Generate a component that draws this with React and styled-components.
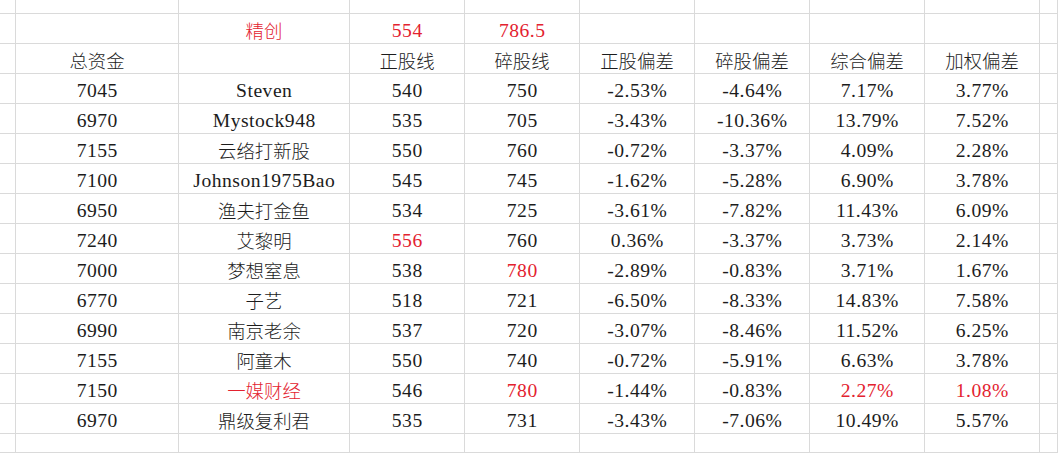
import React from "react";
import styled, { createGlobalStyle } from "styled-components";

const Global = createGlobalStyle`
  html, body { margin: 0; padding: 0; background: #fff; overflow: hidden; }
  #root { width: 1058px; height: 453px; overflow: hidden; }
`;

const Sheet = styled.div`
  display: grid;
  grid-template-columns: 16px 163px 171px repeat(6, 115px) 1fr;
  grid-template-rows: 14px repeat(14, 30px) 1fr;
  width: 1058px;
  height: 453px;
  background: #fff;
`;

const Cell = styled.div`
  box-sizing: border-box;
  border-right: 1px solid #dadada;
  border-bottom: 1px solid #dadada;
  display: flex;
  align-items: center;
  justify-content: center;
  padding-top: ${(p) => (p.$cjk ? "3px" : "4px")};
  white-space: nowrap;
  overflow: hidden;
  color: ${(p) => (p.$red ? "#e3222f" : "#1c1c1c")};
  font-family: ${(p) =>
    p.$cjk
      ? '"Noto Sans CJK SC", "Noto Sans", sans-serif'
      : '"Liberation Serif", "Noto Sans CJK SC", serif'};
  font-size: ${(p) => (p.$cjk ? "18.4px" : "19.6px")};
  font-weight: ${(p) => (p.$cjk ? 300 : 400)};
  letter-spacing: ${(p) => (p.$cjk ? "0" : "0.5px")};
  text-indent: ${(p) => (p.$cjk ? "0" : "0.5px")};
  line-height: 1;
`;

const cjkRe = /[\u4e00-\u9fff]/;

const rows = [
  ["", { t: "精创", r: true }, { t: "554", r: true }, { t: "786.5", r: true }, "", "", "", ""],
  ["总资金", "", "正股线", "碎股线", "正股偏差", "碎股偏差", "综合偏差", "加权偏差"],
  ["7045", "Steven", "540", "750", "-2.53%", "-4.64%", "7.17%", "3.77%"],
  ["6970", "Mystock948", "535", "705", "-3.43%", "-10.36%", "13.79%", "7.52%"],
  ["7155", "云络打新股", "550", "760", "-0.72%", "-3.37%", "4.09%", "2.28%"],
  ["7100", "Johnson1975Bao", "545", "745", "-1.62%", "-5.28%", "6.90%", "3.78%"],
  ["6950", "渔夫打金鱼", "534", "725", "-3.61%", "-7.82%", "11.43%", "6.09%"],
  ["7240", "艾黎明", { t: "556", r: true }, "760", "0.36%", "-3.37%", "3.73%", "2.14%"],
  ["7000", "梦想窒息", "538", { t: "780", r: true }, "-2.89%", "-0.83%", "3.71%", "1.67%"],
  ["6770", "子艺", "518", "721", "-6.50%", "-8.33%", "14.83%", "7.58%"],
  ["6990", "南京老余", "537", "720", "-3.07%", "-8.46%", "11.52%", "6.25%"],
  ["7155", "阿童木", "550", "740", "-0.72%", "-5.91%", "6.63%", "3.78%"],
  ["7150", { t: "一媒财经", r: true }, "546", { t: "780", r: true }, "-1.44%", "-0.83%", { t: "2.27%", r: true }, { t: "1.08%", r: true }],
  ["6970", "鼎级复利君", "535", "731", "-3.43%", "-7.06%", "10.49%", "5.57%"],
];

const blankRow = () => Array.from({ length: 10 }, () => "");

export default function App() {
  const all = [blankRow(), ...rows.map((r) => ["", ...r, ""]), blankRow()];
  return (
    <>
      <Global />
      <Sheet>
        {all.map((row, ri) =>
          row.map((c, ci) => {
            const t = typeof c === "string" ? c : c.t;
            const red = typeof c === "object" && c.r;
            return (
              <Cell key={`${ri}-${ci}`} $cjk={cjkRe.test(t)} $red={red}>
                {t}
              </Cell>
            );
          })
        )}
      </Sheet>
    </>
  );
}
